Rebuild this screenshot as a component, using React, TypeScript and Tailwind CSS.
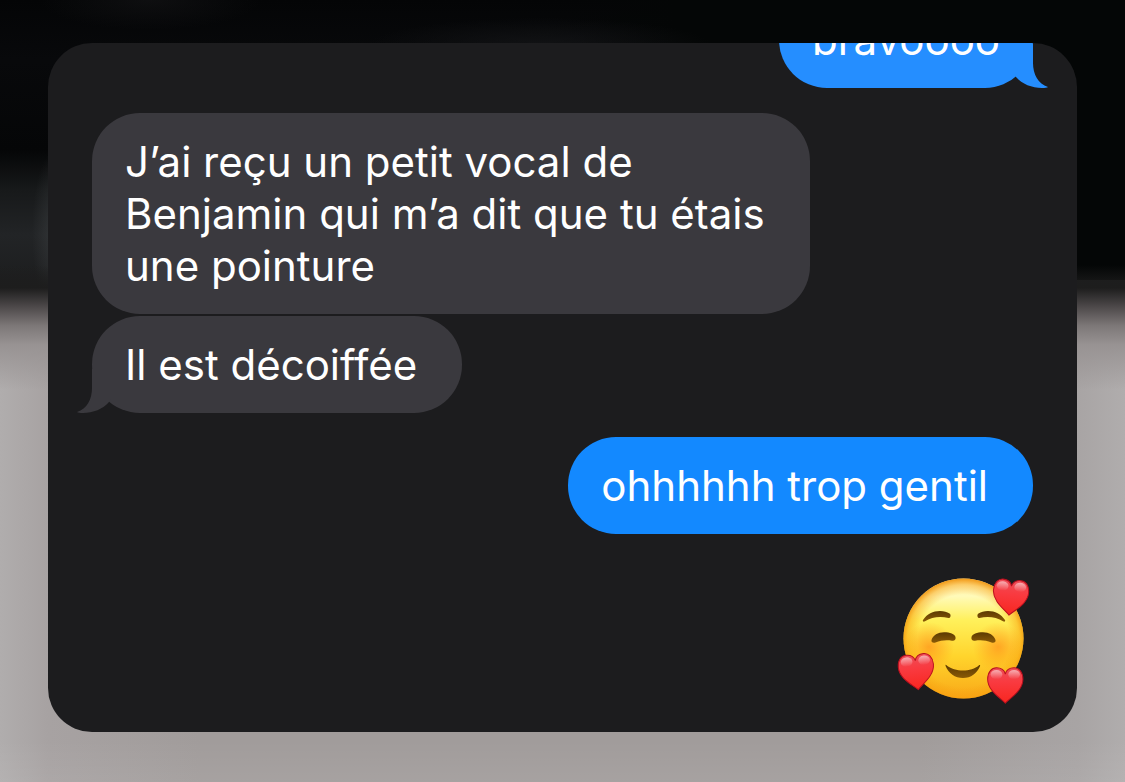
import type { ReactNode } from "react";

type Side = "me" | "them";

type BubbleProps = {
  from: Side;
  tail?: boolean;
  className?: string;
  children: ReactNode;
};

function Tail({ from }: { from: Side }) {
  return (
    <svg
      aria-hidden="true"
      viewBox="0 0 48 44"
      className={
        from === "me"
          ? "absolute bottom-0 -right-[15px] h-[44px] w-[48px] text-[#258eff]"
          : "absolute bottom-0 -left-[15px] h-[44px] w-[48px] -scale-x-100 text-[#3a393e]"
      }
    >
      <path
        d="M14 0H33V19C33 30 38 40 48 43C47 43.600 45 44 42 44C32 44 22 40 16 33L14 30Z"
        fill="currentColor"
      />
    </svg>
  );
}

function Bubble({ from, tail = false, className = "", children }: BubbleProps) {
  const mine = from === "me";
  return (
    <li className={`flex ${mine ? "justify-end" : "justify-start"} ${className}`}>
      <div
        className={`relative max-w-[718px] rounded-[48px] pt-[23px] pb-[22px] pl-[33px] ${
          mine
            ? tail
              ? "bg-[#258eff] pr-[33px]"
              : "bg-[#1389ff] pr-[45px]"
            : "bg-[#3a393e] pr-[45px]"
        }`}
      >
        <p>{children}</p>
        {tail && <Tail from={from} />}
      </div>
    </li>
  );
}

const heartPath =
  "M0 17C-5 12-18 5-18-6C-18-13-14-17-9-17C-5-17-1-15 0-11C1-15 5-17 9-17C14-17 18-13 18-6C18 5 5 12 0 17Z";

function Heart({ transform }: { transform: string }) {
  return (
    <g transform={transform}>
      <path d={heartPath} fill="url(#heart)" stroke="#b80f1e" strokeWidth="1" />
      <ellipse cx="-9" cy="-10.500" rx="6" ry="4.500" fill="url(#gloss)" />
      <ellipse cx="9" cy="-10.500" rx="6" ry="4.500" fill="url(#gloss)" />
    </g>
  );
}

function LovingFace() {
  return (
    <svg
      role="img"
      aria-label="🥰"
      viewBox="0 0 136 134"
      className="h-[134px] w-[136px]"
    >
      <defs>
        <linearGradient id="face" x1="0" y1="0" x2="0" y2="1">
          <stop offset="0" stopColor="#fff3b8" />
          <stop offset="0.150" stopColor="#fffab8" />
          <stop offset="0.350" stopColor="#fff05a" />
          <stop offset="0.650" stopColor="#ffd42c" />
          <stop offset="1" stopColor="#f9a818" />
        </linearGradient>
        <radialGradient id="rim" cx="0.500" cy="0.520" r="0.520">
          <stop offset="0.740" stopColor="#f59a0c" stopOpacity="0" />
          <stop offset="0.900" stopColor="#f89c0c" stopOpacity="0.450" />
          <stop offset="1" stopColor="#ef920c" stopOpacity="0.950" />
        </radialGradient>
        <radialGradient id="blush">
          <stop offset="0" stopColor="#ff7a12" stopOpacity="0.550" />
          <stop offset="0.500" stopColor="#ff8614" stopOpacity="0.300" />
          <stop offset="1" stopColor="#ff8f18" stopOpacity="0" />
        </radialGradient>
        <linearGradient id="heart" x1="0" y1="0" x2="0" y2="1">
          <stop offset="0" stopColor="#ee4e58" />
          <stop offset="0.400" stopColor="#f93a40" />
          <stop offset="1" stopColor="#f8261f" />
        </linearGradient>
        <linearGradient id="gloss" x1="0" y1="0" x2="0" y2="1">
          <stop offset="0" stopColor="#ffffff" stopOpacity="0.550" />
          <stop offset="1" stopColor="#ffffff" stopOpacity="0" />
        </linearGradient>
        <linearGradient id="ink" x1="0" y1="0" x2="0" y2="1">
          <stop offset="0" stopColor="#5c3a02" />
          <stop offset="1" stopColor="#8a5a06" />
        </linearGradient>
      </defs>
      <circle cx="66.500" cy="64.500" r="60" fill="url(#face)" />
      <circle cx="66.500" cy="64.500" r="60" fill="url(#rim)" />
      <circle cx="32" cy="73" r="25" fill="url(#blush)" />
      <circle cx="101" cy="73" r="25" fill="url(#blush)" />
      <g fill="url(#ink)">
        <path d="M26 46C30 40 36 37 43 37C47 37 50 38 52.500 39.500C54.500 41 53.500 44.300 51.500 44C43 42 35 43 27.500 47.500C26.300 48 25.400 47 26 46Z" />
        <path d="M108 46C104 40 98 37 91 37C87 37 84 38 81.500 39.500C79.500 41 80.500 44.300 82.500 44C91 42 99 43 106.500 47.500C107.700 48 108.600 47 108 46Z" />
        <path d="M34.500 66C36 61 41 58.200 47 58.200C53 58.200 57.800 60 58.500 63C59 66 57.500 67 55 66.700C49 65.800 44 66.300 38.500 68.500C36 69.300 34 68.200 34.500 66Z" />
        <path d="M98.500 66C97 61 92 58.200 86 58.200C80 58.200 75.200 60 74.500 63C74 66 75.500 67 78 66.700C84 65.800 89 66.300 94.500 68.500C97 69.300 99 68.200 98.500 66Z" />
        <path d="M49.200 91C54 95 60 96.500 66 96.500C72 96.500 78 95 82.300 91C83 90.600 83.400 91.300 83 92.300C80 99.500 74 104 66 104C58 104 51.500 99.500 48.700 92.300C48.300 91.300 48.600 90.500 49.200 91Z" />
      </g>
      <Heart transform="translate(113.500 23.500) rotate(5) scale(0.980 1.040)" />
      <Heart transform="translate(19.500 98) rotate(-6) scale(0.980 1.040)" />
      <Heart transform="translate(108.300 111.500) scale(0.980 1.040)" />
    </svg>
  );
}

export default function App() {
  return (
    <main className="min-h-screen bg-[radial-gradient(ellipse_22px_80px_at_54px_232px,#3c3f4199,transparent),radial-gradient(ellipse_170px_26px_at_540px_44px,#111214,transparent),radial-gradient(ellipse_110px_30px_at_150px_0px,#15151799,transparent),linear-gradient(to_right,transparent_50%,#040606_60%),linear-gradient(#040506_0px,#08090b_60px,#050607_150px,#17191a_190px,#222426_235px,#1d1e1f_280px,#1d1e1f_320px)] bg-no-repeat [background-size:100%_100%,100%_100%,100%_100%,100%_280px,100%_100%]">
      <div className="min-h-screen bg-[linear-gradient(transparent_265px,#1d1d1d_288px,#4b4748_306px,#7d7878_326px,#989393_345px,transparent_390px),linear-gradient(transparent_740px,#ffffff16_800px),linear-gradient(to_right,#b0adad,#a7a2a2_48px,#a19c9b_200px,#a19c9b_920px,#a8a4a4_1077px,#b0adad)] bg-no-repeat px-12 pt-[43px] pb-[51px] font-[Inter,'Liberation_Sans',sans-serif] text-[42px] leading-[52px] text-white [background-position:0_0,0_0,0_345px] [background-size:100%_100%,100%_100%,100%_100%]">
        <ol
          aria-label="Messages"
          className="flex flex-col overflow-hidden rounded-[44px] bg-[#1c1c1e] px-[44px] pb-6"
        >
          <Bubble from="me" tail className="-mt-[52px]">
            bravoooo
          </Bubble>
          <Bubble from="them" className="mt-[25px]">
            J’ai reçu un petit vocal de Benjamin qui m’a dit que tu étais une
            pointure
          </Bubble>
          <Bubble from="them" tail className="mt-0.5">
            Il est décoiffée
          </Bubble>
          <Bubble from="me" className="mt-6">
            ohhhhhh trop gentil
          </Bubble>
          <li className="mt-10 flex justify-end">
            <LovingFace />
          </li>
        </ol>
      </div>
    </main>
  );
}
